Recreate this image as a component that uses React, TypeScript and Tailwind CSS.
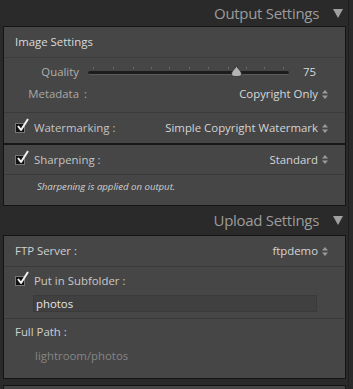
import React from "react";

const font = { fontFamily: '"Open Sans", "Noto Sans", sans-serif' };

function UpDown() {
  return (
    <svg width="6" height="9" viewBox="0 0 6 9" className="ml-[4px] shrink-0">
      <path d="M0 3.5 L3 0 L6 3.5 Z" fill="#9a9a9a" />
      <path d="M0 5.5 L3 9 L6 5.5 Z" fill="#9a9a9a" />
    </svg>
  );
}

function Check() {
  return (
    <div className="relative w-[10px] h-[10px] shrink-0">
      <div className="absolute inset-0 bg-[#111] border border-[#777]" />
      <svg width="14" height="14" viewBox="0 0 14 14" className="absolute left-[1px] top-[-5px]">
        <path d="M2 8 L5 12 L12 1" stroke="#f2f2f2" strokeWidth="2" fill="none" strokeLinejoin="round" />
      </svg>
    </div>
  );
}

function Header({ title, h }: { title: string; h: string }) {
  return (
    <div className={`flex items-center justify-end pr-[5px] ${h}`}>
      <span className="text-[15px] text-[#9c9c9c] tracking-[-0.3px]">{title}</span>
      <svg width="10" height="9" viewBox="0 0 10 9" className="ml-[14px]">
        <path d="M0 0 L10 0 L5 9 Z" fill="#a0a0a0" />
      </svg>
    </div>
  );
}

function Slider() {
  const ticks = [5, 25, 45, 63, 81, 101, 120, 140, 158, 176, 195];
  return (
    <div className="relative w-[201px] h-[14px] ml-[9px]">
      {ticks.map((t) => (
        <div key={t} className="absolute top-[2px] w-px h-[2px] bg-[#6a6a6a]" style={{ left: t }} />
      ))}
      <div className="absolute left-0 right-0 top-[6px] h-[4px] rounded-full bg-[#1c1c1c] border-b border-[#5a5a5a]" />
      <svg width="11" height="11" viewBox="0 0 11 11" className="absolute left-[143px] top-[1px]">
        <path d="M5.5 0 C7 3 10.5 5 10.5 8 C10.5 10 9 10.5 5.5 10.5 C2 10.5 0.5 10 0.5 8 C0.5 5 4 3 5.5 0 Z" fill="#b4b4b4" stroke="#2a2a2a" strokeWidth="0.8" />
      </svg>
    </div>
  );
}

export default function App() {
  return (
    <div className="w-[353px] h-[389px] bg-[#2a2a2a] overflow-hidden text-[11.4px]" style={font}>
      <div className="w-[349px] border-r border-[#1e1e1e] h-full">
        <Header title="Output Settings" h="h-[26px]" />
        <div className="ml-[3px] w-[343px] border border-[#141414] bg-[#464646]">
          <div className="h-[31px] flex items-center pl-[11px] text-[#dadada] border-b border-[#3c3c3c]">
            Image Settings
          </div>
          <div className="pt-[3px] pb-[7px] border-b border-[#3a3a3a]">
            <div className="h-[22px] flex items-center">
              <span className="w-[75px] text-right text-[#b0b0b0]">Quality</span>
              <Slider />
              <span className="ml-[14px] text-[#d8d8d8]">75</span>
            </div>
            <div className="h-[22px] flex items-center">
              <span className="w-[75px] text-right text-[#a8a8a8]">Metadata</span>
              <span className="ml-[5px] text-[#a8a8a8]">:</span>
              <span className="ml-auto text-[#d8d8d8]">Copyright Only</span>
              <span className="mr-[17px] flex"><UpDown /></span>
            </div>
          </div>
          <div className="h-[32px] flex items-center pl-[11px] border-b-2 border-[#161616]">
            <Check />
            <span className="ml-[9px] text-[#c4c4c4]">Watermarking :</span>
            <span className="ml-auto text-[#d4d4d4]">Simple Copyright Watermark</span>
            <span className="mr-[17px] flex"><UpDown /></span>
          </div>
          <div className="h-[30px] flex items-center pl-[11px] border-b border-[#3a3a3a]">
            <Check />
            <span className="ml-[9px] text-[#c4c4c4]">Sharpening :</span>
            <span className="ml-auto text-[#d4d4d4]">Standard</span>
            <span className="mr-[17px] flex"><UpDown /></span>
          </div>
          <div className="h-[30px] pl-[33px] pt-[5px] text-[9.6px] italic text-[#d0d0d0] leading-[13px]">
            Sharpening is applied on output.
          </div>
        </div>
        <Header title="Upload Settings" h="h-[29px]" />
        <div className="ml-[3px] w-[343px] border border-[#141414] bg-[#464646]">
          <div className="h-[31px] flex items-center pl-[11px] border-b border-[#3a3a3a]">
            <span className="text-[#d0d0d0]">FTP Server :</span>
            <span className="ml-auto text-[#d4d4d4]">ftpdemo</span>
            <span className="mr-[17px] flex"><UpDown /></span>
          </div>
          <div className="border-b border-[#3a3a3a] pb-[6px]">
            <div className="h-[28px] flex items-center pl-[11px]">
              <Check />
              <span className="ml-[9px] text-[#c8c8c8]">Put in Subfolder :</span>
            </div>
            <div className="ml-[29px] w-[284px] h-[17px] border border-[#3a3a3a] bg-[#404040] flex items-center pl-[2px] text-[#e4e4e4]">
              photos
            </div>
          </div>
          <div className="h-[25px] flex items-center pl-[11px] text-[#d0d0d0]">Full Path :</div>
          <div className="h-[24px] flex items-center pl-[31px] text-[#858585]">lightroom/photos</div>
          <div className="h-[10px]" />
        </div>
        <div className="mt-[6px] ml-[3px] w-[343px] h-[10px] border border-[#141414] bg-[#464646]" />
      </div>
    </div>
  );
}
